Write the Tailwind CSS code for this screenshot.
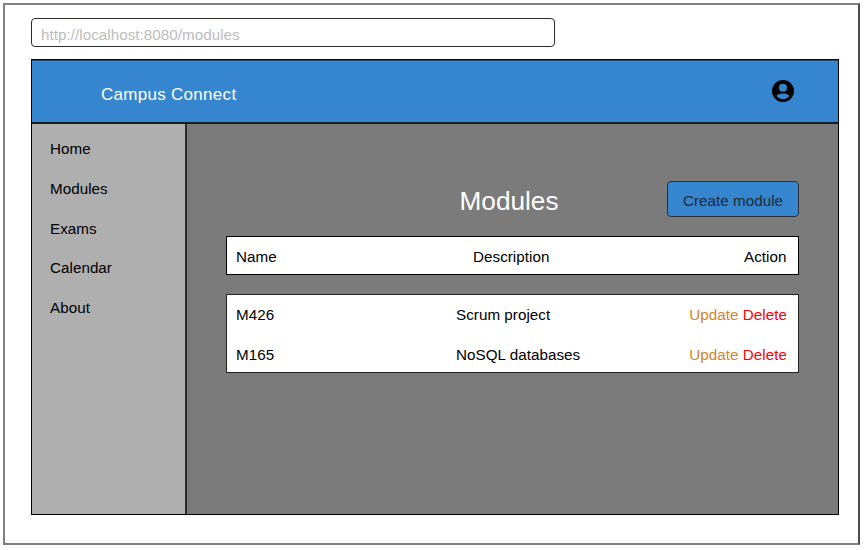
<!DOCTYPE html>
<html lang="en">
<head>
<meta charset="utf-8">
<title>Campus Connect</title>
<script src="https://cdn.jsdelivr.net/npm/@tailwindcss/browser@4"></script>
</head>
<body class="w-[865px] h-[550px] overflow-hidden bg-white pl-[3px] pt-[3px] text-[15.2px] tracking-[0.04px] leading-5 text-black font-['Liberation_Sans',Arial,sans-serif]">
<div class="w-[857px] h-[542px] border-2 border-[#808080] border-r-[#4c4c4c] pl-[26px] pt-[13px]">
  <div class="w-[524px] h-[29px] rounded-[4px] border border-[#2b2b2b] pl-[9px] pt-[6px] text-[#bcbcbc] whitespace-nowrap">http://localhost:8080/modules</div>
  <div class="mt-3 w-[808px] h-[456px] border border-black bg-[#7b7b7b] flex flex-col">
    <header class="h-[64px] shrink-0 border-b-2 border-b-[#151d25] border-t border-t-[#1f4c79] bg-[#3685cf] flex justify-between pl-[69px] pr-[43px]">
      <h1 class="mt-[22px] text-[17px] tracking-[0.29px] leading-6 text-white">Campus Connect</h1>
      <svg class="mt-[18px] w-[24px] h-[24px]" viewBox="0 0 24 24"><path fill="#000" fill-rule="evenodd" d="M12 1a11 11 0 1 0 0 22a11 11 0 0 0 0-22zM12 4.700a4 4 0 1 1 0 8a4 4 0 0 1 0-8zM12 20c-2.700 0-5-1.200-6.400-3.100c.3-1.600 4.200-2.500 6.400-2.500s6.100.9 6.400 2.500c-1.400 1.900-3.700 3.100-6.400 3.100z"/></svg>
    </header>
    <div class="flex flex-1">
      <nav class="w-[155px] shrink-0 border-r-2 border-[#2c2c2c] bg-[#afafaf] pl-[18px] pt-[15px]">
        <a class="block h-10">Home</a>
        <a class="block h-10">Modules</a>
        <a class="block h-[39px]">Exams</a>
        <a class="block h-10">Calendar</a>
        <a class="block">About</a>
      </nav>
      <main class="flex-1 pl-[39px] pr-[39px] pt-[57px]">
        <div class="flex justify-between">
          <h2 class="ml-[233.5px] mt-[4px] text-[26.2px] tracking-normal leading-8 text-white">Modules</h2>
          <button class="w-[132px] h-[36px] rounded-[4px] border border-[#2b2f33] bg-[#3685cf] text-[#1f2a35] pt-[4px]">Create module</button>
        </div>
        <div class="mt-[19px] h-[39px] border border-black bg-white pl-[9px] pr-[11.500px] pt-[10px] flex justify-between">
          <span class="w-[237px]">Name</span><span class="flex-1">Description</span><span>Action</span>
        </div>
        <div class="mt-[19px] h-[79px] border border-[#222] bg-white pl-[9px] pr-[11px] pt-[10px]">
          <div class="flex h-10"><span class="w-[220px]">M426</span><span class="flex-1">Scrum project</span><span><a class="text-[#d0862a]">Update</a> <a class="text-[#f00]">Delete</a></span></div>
          <div class="flex h-5"><span class="w-[220px]">M165</span><span class="flex-1">NoSQL databases</span><span><a class="text-[#d0862a]">Update</a> <a class="text-[#f00]">Delete</a></span></div>
        </div>
      </main>
    </div>
  </div>
</div>
</body>
</html>
